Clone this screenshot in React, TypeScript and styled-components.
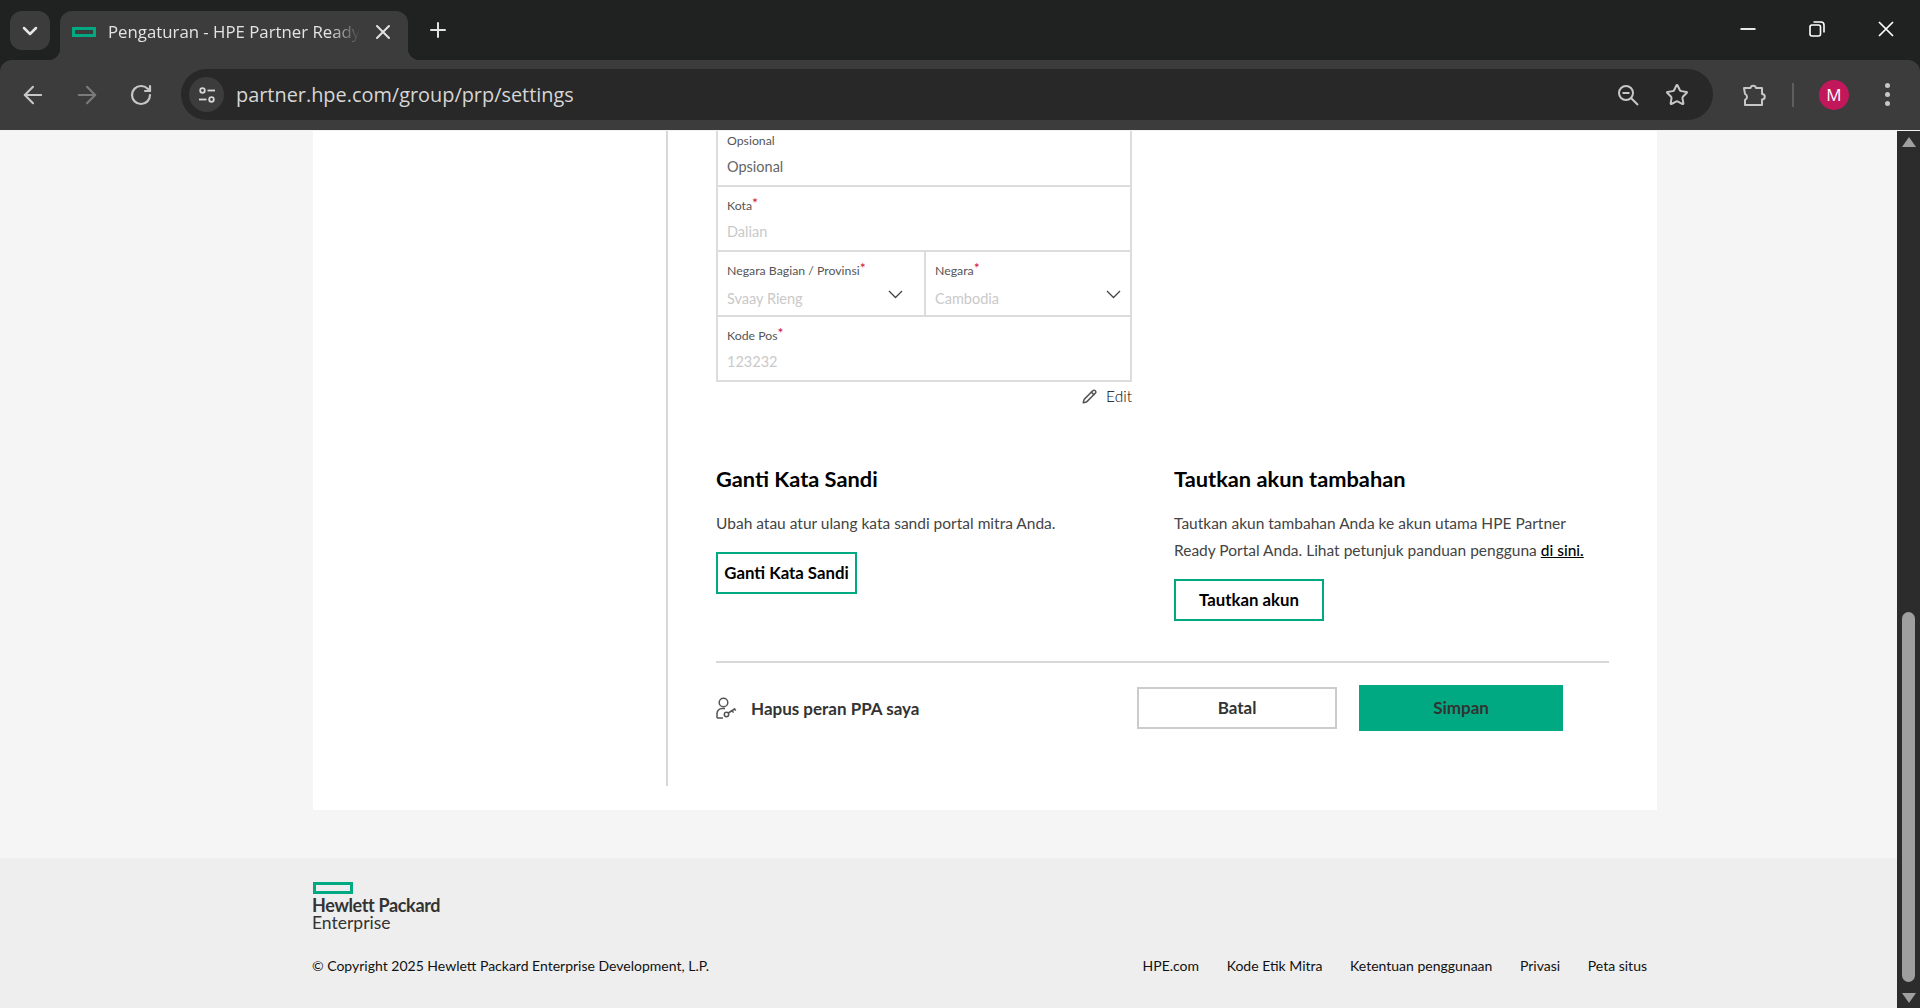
import React from "react";
import styled, { createGlobalStyle } from "styled-components";
import { ArrowLeft, ArrowRight, ChevronDown, Pencil, Plus, RotateCw, Star, X } from "lucide-react";

const GREEN = "#01a982";
const BODY_FONT = `Lato, "Liberation Sans", sans-serif`;
const UI_FONT = `"Open Sans", "Noto Sans", sans-serif`;

const GlobalStyle = createGlobalStyle`
  html, body {
    margin: 0;
    padding: 0;
    height: 100%;
    overflow: hidden;
    font-family: ${BODY_FONT};
  }
  * { box-sizing: border-box; }
`;

const Screen = styled.div`
  width: 1920px;
  height: 1008px;
  display: flex;
  flex-direction: column;
  overflow: hidden;
  background: #202221;
`;

/* browser chrome */
const TabStrip = styled.div`
  height: 60px;
  flex: none;
  display: flex;
  align-items: flex-end;
  padding-left: 10px;
  background: #202221;
`;
const TabSearch = styled.div`
  width: 40px;
  height: 39px;
  align-self: flex-start;
  margin-top: 11px;
  border-radius: 12px;
  background: #3c3c3c;
  color: #e6e6e6;
  display: flex;
  align-items: center;
  justify-content: center;
`;
const Tab = styled.div`
  position: relative;
  width: 348px;
  height: 49px;
  margin-left: 10px;
  padding: 0 0 8px 12px;
  background: #3c3c3c;
  border-radius: 12px 12px 0 0;
  display: flex;
  align-items: center;
  color: #e3e3e3;
  &::before,
  &::after {
    content: "";
    position: absolute;
    bottom: 0;
    width: 12px;
    height: 12px;
  }
  &::before {
    left: -12px;
    background: radial-gradient(circle at 0 0, #202221 12px, #3c3c3c 12.5px);
  }
  &::after {
    right: -12px;
    background: radial-gradient(circle at 100% 0, #202221 12px, #3c3c3c 12.5px);
  }
`;
const Favicon = styled.span`
  width: 24px;
  height: 10px;
  flex: none;
  border: 3px solid ${GREEN};
`;
const TabTitle = styled.span`
  width: 252px;
  margin: 0 11px 0 12px;
  font: 400 16.8px ${UI_FONT};
  white-space: nowrap;
  overflow: hidden;
  -webkit-mask-image: linear-gradient(to right, #000 88%, transparent);
  mask-image: linear-gradient(to right, #000 88%, transparent);
`;
const NewTab = styled.div`
  margin: 0 0 18px 18px;
  height: 24px;
  color: #e3e3e3;
`;
const WindowControls = styled.div`
  display: flex;
  align-items: center;
  gap: 53px;
  margin-left: auto;
  padding-right: 26px;
  align-self: flex-start;
  height: 58px;
`;
const Toolbar = styled.div`
  height: 71px;
  flex: none;
  display: flex;
  align-items: center;
  padding: 0 0 1px 19px;
  background: #3c3c3c;
  border-radius: 12px 12px 0 0;
  border-bottom: 1px solid #f2f2f2;
  color: #c7c7c7;
`;
const NavButton = styled.div<{ $dim?: boolean }>`
  width: 28px;
  height: 28px;
  margin-right: 26px;
  display: flex;
  align-items: center;
  justify-content: center;
  color: ${(p) => (p.$dim ? "#7b7b7b" : "#c7c7c7")};
`;
const AddressBar = styled.div`
  width: 1532px;
  height: 51px;
  padding: 0 24px 0 8px;
  border-radius: 26px;
  background: #282828;
  display: flex;
  align-items: center;
`;
const SiteInfo = styled.div`
  width: 35px;
  height: 35px;
  border-radius: 50%;
  background: #3c3c3c;
  display: flex;
  align-items: center;
  justify-content: center;
  flex: none;
`;
const Url = styled.span`
  margin-left: 12px;
  font: 400 19.9px ${UI_FONT};
  color: #d6d6d6;
`;
const AddressIcons = styled.div`
  display: flex;
  align-items: center;
  gap: 25px;
  margin-left: auto;
`;
const ToolbarRight = styled.div`
  flex: 1;
  display: flex;
  align-items: center;
  padding-left: 28px;
`;
const Separator = styled.div`
  width: 2px;
  height: 24px;
  margin: 0 25px 0 25px;
  background: #5e5e5e;
`;
const Avatar = styled.div`
  width: 30px;
  height: 30px;
  border-radius: 50%;
  background: #c2185b;
  color: #fff;
  font: 400 17px ${UI_FONT};
  display: flex;
  align-items: center;
  justify-content: center;
`;
const MenuDots = styled.div`
  margin-left: 36px;
  display: flex;
  flex-direction: column;
  gap: 4px;
  i {
    width: 5px;
    height: 5px;
    border-radius: 50%;
    background: #c7c7c7;
  }
`;

/* viewport */
const Viewport = styled.div`
  flex: 1;
  min-height: 0;
  display: flex;
`;
const Page = styled.div`
  flex: 1;
  min-width: 0;
  overflow: hidden;
  display: flex;
  flex-direction: column;
  background: #f5f5f5;
`;
const Scrollbar = styled.div`
  width: 23px;
  flex: none;
  background: #2c2c2c;
  display: flex;
  flex-direction: column;
  align-items: center;
  padding: 6px 0 5px;
`;
const ArrowUp = styled.div`
  width: 0;
  height: 0;
  border-left: 7px solid transparent;
  border-right: 7px solid transparent;
  border-bottom: 10px solid #a0a0a0;
`;
const ArrowDown = styled.div`
  width: 0;
  height: 0;
  border-left: 7px solid transparent;
  border-right: 7px solid transparent;
  border-top: 10px solid #a0a0a0;
`;
const Thumb = styled.div`
  width: 13px;
  height: 370px;
  margin: auto 0 11px;
  border-radius: 7px;
  background: #9f9f9f;
`;

const Card = styled.div`
  width: 1344px;
  height: 679px;
  flex: none;
  margin-left: 313px;
  background: #fff;
  overflow: hidden;
  display: flex;
  align-items: flex-start;
`;
const SideSpace = styled.div`
  width: 355px;
  height: 655px;
  flex: none;
  border-right: 2px solid #d8d8d8;
`;
const Main = styled.div`
  width: 893px;
  margin: -9px 0 0 48px;
`;

const AddressForm = styled.div`
  width: 416px;
  border: 2px solid #dcdcdc;
  border-top: none;
`;
const Row = styled.div`
  height: 65px;
  border-bottom: 2px solid #dcdcdc;
  display: flex;
  &:last-child {
    height: 63px;
    border-bottom: none;
  }
`;
const Field = styled.div<{ $divided?: boolean }>`
  position: relative;
  flex: ${(p) => (p.$divided ? "0 0 208px" : "1")};
  padding: 11px 9px 0;
  border-right: ${(p) => (p.$divided ? "2px solid #dcdcdc" : "none")};
`;
const FieldLabel = styled.div`
  font-size: 12.3px;
  line-height: 16px;
  color: #555;
  white-space: nowrap;
  sup {
    color: #c8123c;
    font-size: 14px;
    line-height: 0;
    vertical-align: 2px;
  }
`;
const FieldValue = styled.div<{ $filled?: boolean; $select?: boolean }>`
  margin-top: ${(p) => (p.$select ? "10px" : "8px")};
  font-size: 14.5px;
  line-height: 20px;
  color: ${(p) => (p.$filled ? "#666" : "#c9c9c9")};
`;
const Caret = styled.svg<{ $right: number }>`
  position: absolute;
  right: ${(p) => p.$right}px;
  top: 38px;
  width: 15px;
  height: 9px;
  fill: none;
  stroke: #444;
  stroke-width: 1.3;
`;
const EditLink = styled.div`
  margin-top: 4px;
  width: 416px;
  height: 20px;
  display: flex;
  align-items: center;
  justify-content: flex-end;
  gap: 9px;
  font-size: 15.5px;
  font-weight: 300;
  color: #000;
  svg {
    color: #555;
  }
`;
const Columns = styled.div`
  display: grid;
  grid-template-columns: 458px 1fr;
  margin-top: 60px;
`;
const Heading = styled.h2`
  margin: 0;
  font-size: 21.8px;
  line-height: 26px;
  font-weight: 700;
  color: #000;
`;
const BodyText = styled.p`
  margin: 18px 0 15px;
  font-size: 15.5px;
  line-height: 27px;
  font-weight: 400;
  color: #444;
  white-space: nowrap;
  a {
    color: #000;
    font-weight: 500;
    text-decoration: underline;
  }
`;
const OutlineButton = styled.button<{ $width: number }>`
  display: block;
  width: ${(p) => p.$width}px;
  height: 42px;
  padding: 0 0 2px;
  background: #fff;
  border: 2px solid ${GREEN};
  border-radius: 0;
  font: 700 16.8px ${BODY_FONT};
  color: #000;
`;
const Rule = styled.div`
  height: 2px;
  margin-top: 40px;
  background: #d8d8d8;
`;
const Actions = styled.div`
  height: 46px;
  margin-top: 22px;
  padding-right: 46px;
  display: flex;
  align-items: center;
`;
const RemoveRole = styled.div`
  display: flex;
  align-items: center;
  gap: 13px;
  font-size: 17px;
  font-weight: 700;
  color: #333;
`;
const CancelButton = styled.button`
  width: 200px;
  height: 42px;
  margin-left: auto;
  padding: 0 0 2px;
  background: #fff;
  border: 2px solid #ccc;
  border-radius: 0;
  font: 700 17px ${BODY_FONT};
  color: #333;
`;
const SaveButton = styled.button`
  width: 204px;
  height: 46px;
  margin-left: 22px;
  padding: 0 0 2px;
  background: ${GREEN};
  border: none;
  border-radius: 0;
  font: 700 17px ${BODY_FONT};
  color: #333;
`;

/* footer */
const Footer = styled.footer`
  height: 150px;
  flex: none;
  margin-top: 48px;
  padding: 24px 250px 0 312px;
  background: #eee;
`;
const LogoMark = styled.div`
  width: 40px;
  height: 12px;
  margin-left: 1px;
  border: 3px solid ${GREEN};
`;
const LogoName = styled.div`
  margin-top: 3px;
  font-size: 18px;
  line-height: 17px;
  font-weight: 700;
  color: #333;
  letter-spacing: -0.35px;
`;
const LogoSub = styled.div`
  font-size: 17.5px;
  line-height: 17px;
  font-weight: 400;
  color: #333;
`;
const FooterBottom = styled.div`
  margin-top: 25px;
  display: flex;
  justify-content: space-between;
  font-size: 14px;
  line-height: 20px;
  color: #111;
`;
const FooterLinks = styled.div`
  display: flex;
  gap: 27.6px;
`;

const FOOTER_LINKS = ["HPE.com", "Kode Etik Mitra", "Ketentuan penggunaan", "Privasi", "Peta situs"];

const Required = () => <sup>*</sup>;

const SelectCaret = ({ right }: { right: number }) => (
  <Caret $right={right} viewBox="0 0 15 9">
    <path d="M1 1l6.5 6.5L14 1" />
  </Caret>
);

const SiteSettingsIcon = () => (
  <svg width="20" height="20" viewBox="0 0 20 20" fill="none" stroke="#d6d6d6" strokeWidth="1.8">
    <circle cx="5.5" cy="5.5" r="2.3" />
    <path d="M10.5 5.5H18" />
    <circle cx="14.5" cy="14.5" r="2.3" />
    <path d="M2 14.5h7.5" />
  </svg>
);

const ZoomOutIcon = () => (
  <svg width="24" height="24" viewBox="0 0 24 24" fill="none" stroke="#c7c7c7" strokeWidth="2">
    <circle cx="10" cy="10" r="7" />
    <path d="M6.5 10h7M15 15l7 7" />
  </svg>
);

const ExtensionIcon = () => (
  <svg width="26" height="26" viewBox="0 0 26 26" fill="none" stroke="#c7c7c7" strokeWidth="2" strokeLinejoin="round">
    <path d="M3 6h6.5a2.8 2.8 0 0 1 5.5 0H21v6a2.6 2.6 0 0 1 0 5.5V23H4v-5a3.4 3.4 0 0 0 0-6.2z" />
  </svg>
);

const RestoreIcon = () => (
  <svg width="16" height="16" viewBox="0 0 16 16" fill="none" stroke="#fff" strokeWidth="1.6">
    <rect x="1" y="4" width="10.5" height="11" rx="2" />
    <path d="M4.5 1h7.5a3 3 0 0 1 3 3v7.5" />
  </svg>
);

const MinimizeIcon = () => (
  <svg width="16" height="16" viewBox="0 0 16 16" stroke="#fff" strokeWidth="1.8">
    <path d="M0.5 8h15" />
  </svg>
);

const CloseIcon = () => (
  <svg width="16" height="16" viewBox="0 0 16 16" stroke="#fff" strokeWidth="1.7">
    <path d="M1 1l14 14M15 1L1 15" />
  </svg>
);

const UserKeyIcon = () => (
  <svg width="22" height="22" viewBox="0 0 22 22" fill="none" stroke="#555" strokeWidth="1.5">
    <circle cx="7.5" cy="5.5" r="4.3" />
    <path d="M1 21v-4.5a5 5 0 0 1 5-5h3M1 21h6" />
    <circle cx="10.5" cy="17.5" r="2.2" />
    <path d="M12.3 16l7-4.5M16 13.6l1.5 2M18.4 12l1.4 1.6" />
  </svg>
);

const App = () => (
  <Screen>
    <GlobalStyle />
    <TabStrip>
      <TabSearch>
        <ChevronDown size={24} strokeWidth={2.5} />
      </TabSearch>
      <Tab>
        <Favicon />
        <TabTitle>Pengaturan - HPE Partner Ready Portal</TabTitle>
        <X size={24} strokeWidth={2} />
      </Tab>
      <NewTab>
        <Plus size={24} strokeWidth={2} />
      </NewTab>
      <WindowControls>
        <MinimizeIcon />
        <RestoreIcon />
        <CloseIcon />
      </WindowControls>
    </TabStrip>

    <Toolbar>
      <NavButton>
        <ArrowLeft size={28} strokeWidth={1.8} />
      </NavButton>
      <NavButton $dim>
        <ArrowRight size={28} strokeWidth={1.8} />
      </NavButton>
      <NavButton>
        <RotateCw size={24} strokeWidth={2.2} />
      </NavButton>
      <AddressBar>
        <SiteInfo>
          <SiteSettingsIcon />
        </SiteInfo>
        <Url>partner.hpe.com/group/prp/settings</Url>
        <AddressIcons>
          <ZoomOutIcon />
          <Star size={24} strokeWidth={2} />
        </AddressIcons>
      </AddressBar>
      <ToolbarRight>
        <ExtensionIcon />
        <Separator />
        <Avatar>M</Avatar>
        <MenuDots>
          <i />
          <i />
          <i />
        </MenuDots>
      </ToolbarRight>
    </Toolbar>

    <Viewport>
      <Page>
        <Card>
          <SideSpace />
          <Main>
            <AddressForm>
              <Row>
                <Field>
                  <FieldLabel>Opsional</FieldLabel>
                  <FieldValue $filled>Opsional</FieldValue>
                </Field>
              </Row>
              <Row>
                <Field>
                  <FieldLabel>
                    Kota
                    <Required />
                  </FieldLabel>
                  <FieldValue>Dalian</FieldValue>
                </Field>
              </Row>
              <Row>
                <Field $divided>
                  <FieldLabel>
                    Negara Bagian / Provinsi
                    <Required />
                  </FieldLabel>
                  <FieldValue $select>Svaay Rieng</FieldValue>
                  <SelectCaret right={21} />
                </Field>
                <Field>
                  <FieldLabel>
                    Negara
                    <Required />
                  </FieldLabel>
                  <FieldValue $select>Cambodia</FieldValue>
                  <SelectCaret right={9} />
                </Field>
              </Row>
              <Row>
                <Field>
                  <FieldLabel>
                    Kode Pos
                    <Required />
                  </FieldLabel>
                  <FieldValue>123232</FieldValue>
                </Field>
              </Row>
            </AddressForm>
            <EditLink>
              <Pencil size={15} strokeWidth={2.4} />
              Edit
            </EditLink>

            <Columns>
              <div>
                <Heading>Ganti Kata Sandi</Heading>
                <BodyText>Ubah atau atur ulang kata sandi portal mitra Anda.</BodyText>
                <OutlineButton $width={141}>Ganti Kata Sandi</OutlineButton>
              </div>
              <div>
                <Heading>Tautkan akun tambahan</Heading>
                <BodyText>
                  Tautkan akun tambahan Anda ke akun utama HPE Partner
                  <br />
                  Ready Portal Anda. Lihat petunjuk panduan pengguna <a>di sini.</a>
                </BodyText>
                <OutlineButton $width={150}>Tautkan akun</OutlineButton>
              </div>
            </Columns>

            <Rule />
            <Actions>
              <RemoveRole>
                <UserKeyIcon />
                Hapus peran PPA saya
              </RemoveRole>
              <CancelButton>Batal</CancelButton>
              <SaveButton>Simpan</SaveButton>
            </Actions>
          </Main>
        </Card>

        <Footer>
          <LogoMark />
          <LogoName>Hewlett Packard</LogoName>
          <LogoSub>Enterprise</LogoSub>
          <FooterBottom>
            <span>© Copyright 2025 Hewlett Packard Enterprise Development, L.P.</span>
            <FooterLinks>
              {FOOTER_LINKS.map((link) => (
                <span key={link}>{link}</span>
              ))}
            </FooterLinks>
          </FooterBottom>
        </Footer>
      </Page>
      <Scrollbar>
        <ArrowUp />
        <Thumb />
        <ArrowDown />
      </Scrollbar>
    </Viewport>
  </Screen>
);

export default App;
